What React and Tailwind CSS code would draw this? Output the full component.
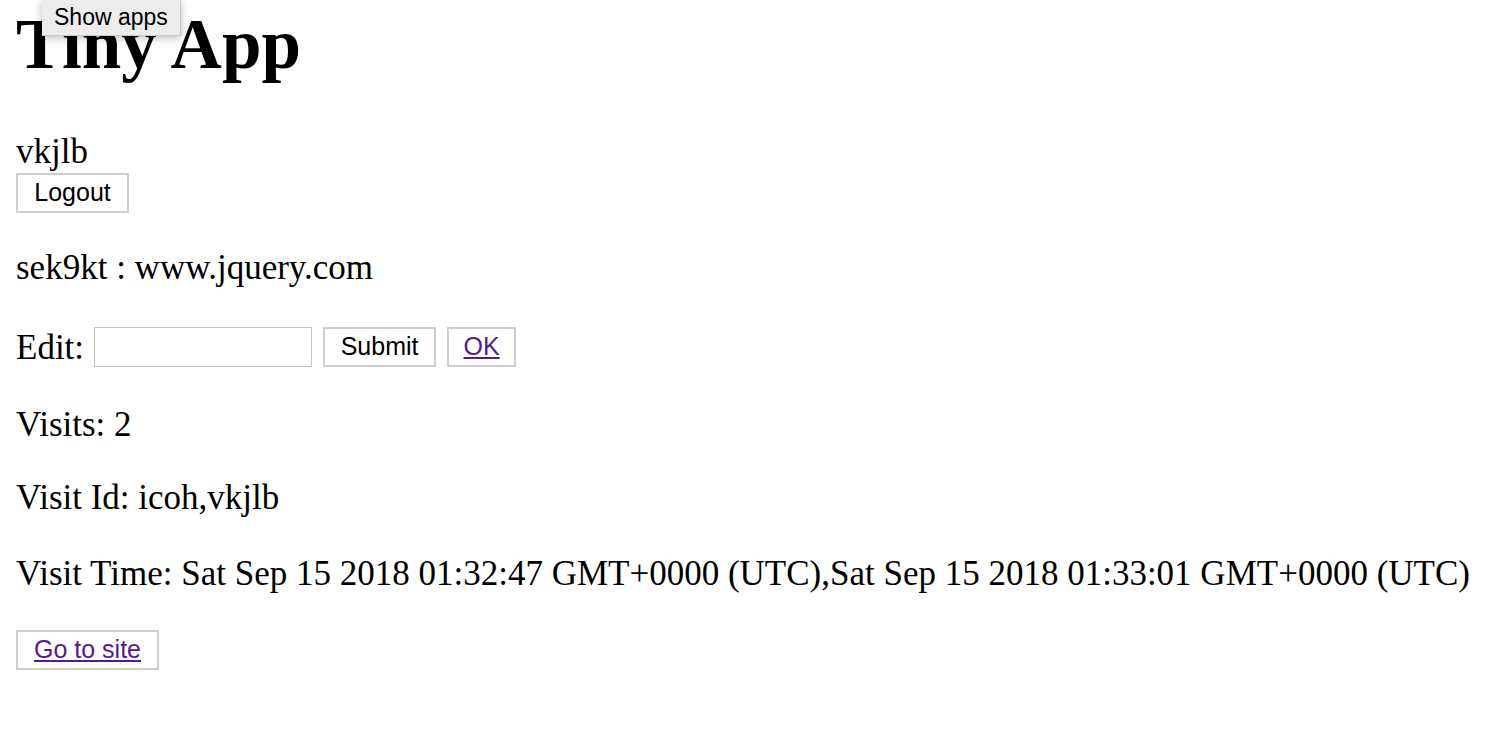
import React from "react";

const serif = { fontFamily: "'Liberation Serif', 'Times New Roman', serif" };

const btn =
  "inline-flex items-center justify-center h-[40px] border-2 border-[#cfcfcf] bg-white text-[25px] font-['Liberation_Sans',Arial,sans-serif]";

const App = () => {
  const visitTimes = [
    "Sat Sep 15 2018 01:32:47 GMT+0000 (UTC)",
    "Sat Sep 15 2018 01:33:01 GMT+0000 (UTC)",
  ];

  return (
    <div className="relative min-h-screen bg-white text-black px-4 font-['Liberation_Serif','Times_New_Roman',serif]">
      <h1 className="pt-[8px] text-[71px] leading-[72px] font-bold">Tiny App</h1>

      <p className="mt-[53px] text-[35px] leading-[37px]">vkjlb</p>
      <div className="mt-[3px]">
        <button className={`${btn} w-[113px] text-black`}>Logout</button>
      </div>

      <p className="mt-[36px] text-[35px] leading-[37px]">sek9kt : www.jquery.com</p>

      <form className="mt-[41px] flex items-center h-[40px] text-[35px]" style={serif}>
        <span className="leading-[37px]">Edit:</span>
        <input
          type="text"
          className="ml-[10px] w-[218px] h-[40px] border border-[#c4c4c4] bg-white"
        />
        <button type="button" className={`${btn} ml-[11px] w-[113px] text-black`}>
          Submit
        </button>
        <a href="#" className={`${btn} ml-[11px] w-[69px] underline text-[#551a8b]`}>
          OK
        </a>
      </form>

      <p className="mt-[39px] text-[35px] leading-[37px]">Visits: 2</p>
      <p className="mt-[36px] text-[35px] leading-[37px]">Visit Id: icoh,vkjlb</p>
      <p className="mt-[39px] text-[35px] leading-[37px]">Visit Time: {visitTimes.join(",")}</p>

      <div className="mt-[38px]">
        <a href="#" className={`${btn} w-[143px] underline text-[#551a8b]`}>
          Go to site
        </a>
      </div>

      <div className="absolute left-[42px] top-0 w-[139px] h-[36px] flex items-center pl-[12px] bg-[#ececec] border-r border-b border-[#c8c8c8] shadow-[0_2px_8px_rgba(0,0,0,0.25)] text-[23px] text-black font-['Liberation_Sans',Arial,sans-serif]">
        Show apps
      </div>
    </div>
  );
};

export default App;
